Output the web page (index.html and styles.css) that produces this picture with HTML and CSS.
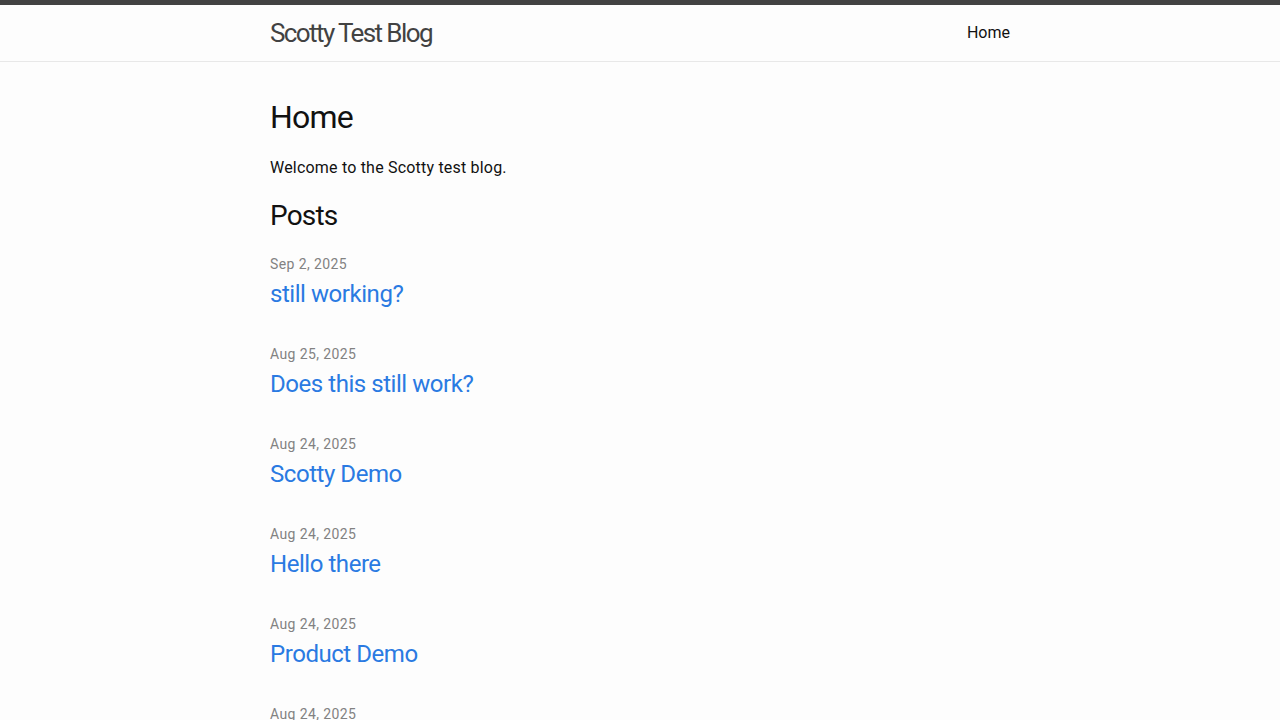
FILE: index.html
```html
<!DOCTYPE html>
<html lang="en">
<head>
<meta charset="utf-8">
<title>Scotty Test Blog</title>
<link rel="stylesheet" href="styles.css">
</head>
<body>
<header class="site-header">
  <div class="wrapper header-row">
    <a class="site-title" href="#">Scotty Test Blog</a>
    <nav class="site-nav">
      <a class="page-link" href="#">Home</a>
    </nav>
  </div>
</header>
<main class="page-content">
  <div class="wrapper">
    <h1 class="page-heading">Home</h1>
    <p>Welcome to the Scotty test blog.</p>
    <h2 class="post-list-heading">Posts</h2>
    <ul class="post-list">
      <li><span class="post-meta">Sep 2, 2025</span><h3><a class="post-link" href="#">still working?</a></h3></li>
      <li><span class="post-meta">Aug 25, 2025</span><h3><a class="post-link" href="#">Does this still work?</a></h3></li>
      <li><span class="post-meta">Aug 24, 2025</span><h3><a class="post-link" href="#">Scotty Demo</a></h3></li>
      <li><span class="post-meta">Aug 24, 2025</span><h3><a class="post-link" href="#">Hello there</a></h3></li>
      <li><span class="post-meta">Aug 24, 2025</span><h3><a class="post-link" href="#">Product Demo</a></h3></li>
      <li><span class="post-meta">Aug 24, 2025</span><h3><a class="post-link" href="#">Another Post</a></h3></li>
    </ul>
  </div>
</main>
</body>
</html>
```

FILE: styles.css
```css
* { margin: 0; padding: 0; box-sizing: border-box; }
body {
  font-family: Roboto, "Noto Sans", sans-serif;
  font-size: 16px;
  line-height: 1.5;
  color: #111;
  background: #fdfdfd;
}
a { text-decoration: none; }
.wrapper {
  max-width: 800px;
  margin: 0 auto;
  padding: 0 30px;
}
.site-header {
  border-top: 5px solid #424242;
  border-bottom: 1px solid #e8e8e8;
  min-height: 62px;
}
.header-row {
  display: flex;
  justify-content: space-between;
  align-items: flex-start;
}
.site-title {
  font-size: 26px;
  font-weight: 400;
  line-height: 56px;
  letter-spacing: -1.6px;
  color: #424242;
}
.site-nav { line-height: 55px; }
.page-link { color: #111; line-height: 1.5; }
.page-content { padding: 31px 0 30px; }
.page-heading {
  font-size: 32px;
  font-weight: 400;
  letter-spacing: -0.8px;
  margin-bottom: 15px;
}
p { margin-bottom: 15px; letter-spacing: 0.2px; }
.post-list-heading {
  font-size: 28px;
  font-weight: 400;
  letter-spacing: -0.8px;
  margin-bottom: 15px;
}
.post-list { list-style: none; }
.post-list li { margin-bottom: 30px; }
.post-meta {
  font-size: 14px;
  letter-spacing: 0.4px;
  color: #828282;
}
.post-list h3 { font-weight: 400; }
.post-link {
  display: block;
  font-size: 24px;
  letter-spacing: -0.45px;
  color: #2a7ae2;
}
```
